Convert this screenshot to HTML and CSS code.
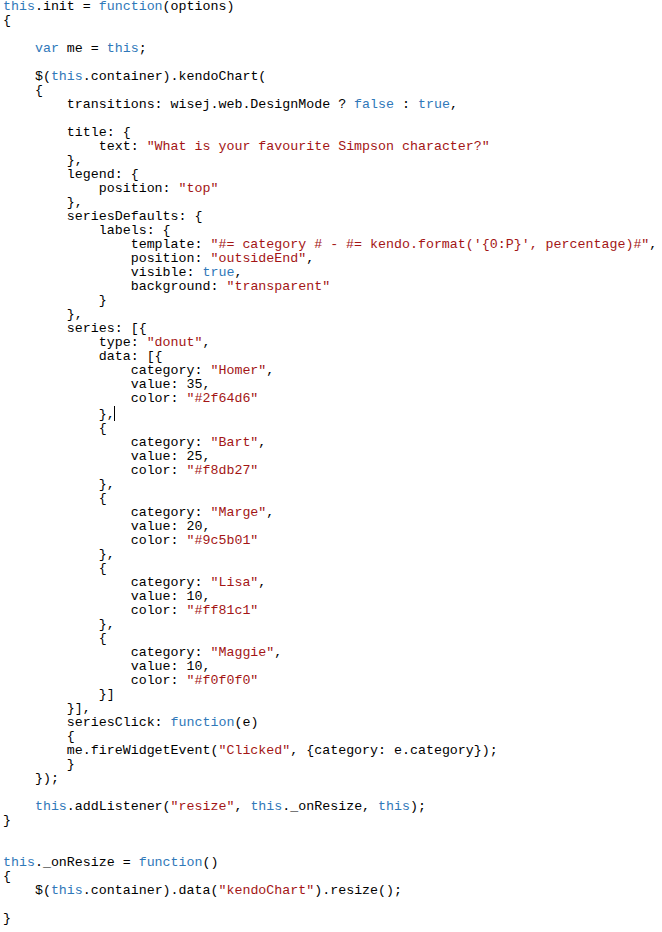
FILE: index.html
```html
<!DOCTYPE html>
<html>
<head>
<meta charset="utf-8">
<link rel="stylesheet" href="styles.css">
</head>
<body>
<pre class="code"><span class="k">this</span>.init = <span class="k">function</span>(options)
{

    <span class="k">var</span> me = <span class="k">this</span>;

    $(<span class="k">this</span>.container).kendoChart(
    {
        transitions: wisej.web.DesignMode ? <span class="k">false</span> : <span class="k">true</span>,

        title: {
            text: <span class="s">"What is your favourite Simpson character?"</span>
        },
        legend: {
            position: <span class="s">"top"</span>
        },
        seriesDefaults: {
            labels: {
                template: <span class="s">"#= category # - #= kendo.format('{0:P}', percentage)#"</span>,
                position: <span class="s">"outsideEnd"</span>,
                visible: <span class="k">true</span>,
                background: <span class="s">"transparent"</span>
            }
        },
        series: [{
            type: <span class="s">"donut"</span>,
            data: [{
                category: <span class="s">"Homer"</span>,
                value: 35,
                color: <span class="s">"#2f64d6"</span>
            },<span class="caret"></span>
            {
                category: <span class="s">"Bart"</span>,
                value: 25,
                color: <span class="s">"#f8db27"</span>
            },
            {
                category: <span class="s">"Marge"</span>,
                value: 20,
                color: <span class="s">"#9c5b01"</span>
            },
            {
                category: <span class="s">"Lisa"</span>,
                value: 10,
                color: <span class="s">"#ff81c1"</span>
            },
            {
                category: <span class="s">"Maggie"</span>,
                value: 10,
                color: <span class="s">"#f0f0f0"</span>
            }]
        }],
        seriesClick: <span class="k">function</span>(e)
        {
        me.fireWidgetEvent(<span class="s">"Clicked"</span>, {category: e.category});
        }
    });

    <span class="k">this</span>.addListener(<span class="s">"resize"</span>, <span class="k">this</span>._onResize, <span class="k">this</span>);
}


<span class="k">this</span>._onResize = <span class="k">function</span>()
{
    $(<span class="k">this</span>.container).data(<span class="s">"kendoChart"</span>).resize();

}
</pre>
</body>
</html>
```
FILE: styles.css
```css
html, body {
  margin: 0;
  padding: 0;
  background: #ffffff;
}
.code {
  margin: 0;
  padding: 0 0 0 3px;
  font-family: "Liberation Mono", "Courier New", monospace;
  font-size: 13.3px;
  line-height: 14px;
  color: #000000;
  white-space: pre;
}
.k {
  color: #2f78b9;
}
.s {
  color: #a31515;
}
.caret {
  display: inline-block;
  width: 1px;
  height: 15px;
  background: #000;
  vertical-align: -3px;
  margin-left: -1px;
}
```
